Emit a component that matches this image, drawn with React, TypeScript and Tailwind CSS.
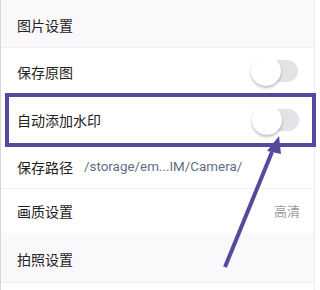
import React, { FC } from "react";

/* Toggle (off state) */
const Toggle: FC = () => (
  <div className="relative w-[47px] h-[30px]">
    <div className="absolute right-0 top-[4px] w-[37px] h-[22px] rounded-full bg-[#e4e2e6]" />
    <div className="absolute left-0 top-0 w-[30px] h-[30px] rounded-full bg-white shadow-[0_2px_3px_rgba(0,0,0,0.25)]" />
  </div>
);

const font = {
  fontFamily: '"Noto Sans CJK SC", "Noto Sans", sans-serif',
};

const App: FC = () => {
  return (
    <div
      className="relative w-[320px] h-[290px] overflow-hidden bg-white text-[14px] text-[#222]"
      style={font}
    >
      <div className="w-[315px] h-full flex flex-col border-l border-[#d8d6da] border-r border-r-[#eeecf0]">
        <div className="h-[48px] shrink-0 flex items-center pl-[16px] pt-[3px] bg-[#fbf8fc] border-b border-[#f0eef2]">
          图片设置
        </div>

        <div className="h-[45px] shrink-0 flex items-center justify-between pl-[16px] pr-[16px]">
          <span className="pt-[4px]">保存原图</span>
          <Toggle />
        </div>

        <div className="h-[54px] shrink-0 -mr-[2px] ml-[4px] flex items-center justify-between pl-[8px] pr-[13px] border-4 border-[#55499b]">
          <span>自动添加水印</span>
          <Toggle />
        </div>

        <div className="h-[42px] shrink-0 flex items-center pl-[16px] border-b border-[#f0eef2]">
          <span>保存路径</span>
          <span
            className="ml-[11px] text-[#5f6d80] text-[13.4px]"
            style={{ fontFamily: 'Roboto, "Noto Sans", sans-serif' }}
          >
            /storage/em...IM/Camera/
          </span>
        </div>

        <div className="h-[44px] shrink-0 flex items-center justify-between pl-[16px] pr-[14px]">
          <span>画质设置</span>
          <span className="text-[13px] text-[#9a9a9a]">高清</span>
        </div>

        <div className="h-[50px] shrink-0 flex items-center pl-[16px] pt-[4px] bg-[#fbf8fc] border-b border-[#eeecf0]">
          拍照设置
        </div>
      </div>

      {/* arrow */}
      <svg
        className="absolute left-0 top-0 pointer-events-none"
        width="320"
        height="290"
        viewBox="0 0 320 290"
      >
        <line
          x1="225"
          y1="267"
          x2="272"
          y2="152"
          stroke="#55499b"
          strokeWidth="4"
        />
        <polygon points="279,136 267,151 281,154" fill="#55499b" />
      </svg>
    </div>
  );
};

export default App;
